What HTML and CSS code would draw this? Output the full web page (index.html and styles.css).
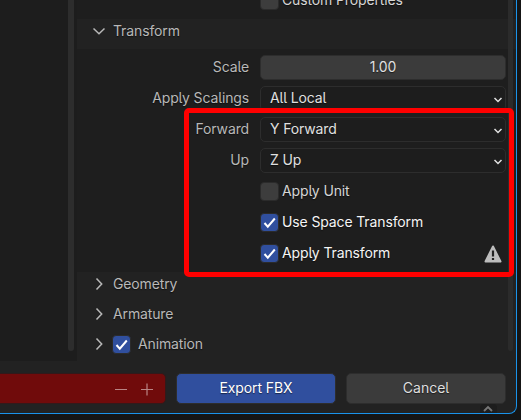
FILE: index.html
```html
<!DOCTYPE html>
<html lang="en">
<head>
<meta charset="utf-8">
<title>Export FBX</title>
<link rel="stylesheet" href="styles.css">
</head>
<body>
<main class="dialog">
  <div class="body">
    <aside class="files"><div class="bar"></div></aside>
    <section class="options">
      <div class="content top">
        <div class="row clipped"><span class="label"></span><span class="check"></span><span class="text">Custom Properties</span></div>
      </div>
      <div class="header open">
        <svg class="chev" viewBox="0 0 14 14"><path d="M1.500 4.500 7 9.700l5.500-5.200"/></svg><span>Transform</span>
      </div>
      <div class="content props">
        <div class="row"><span class="label">Scale</span><div class="number">1.00</div></div>
        <div class="row"><span class="label">Apply Scalings</span><div class="select"><span>All Local</span><svg viewBox="0 0 10 8"><path d="m1.500 2 3.500 3.500L8.500 2"/></svg></div></div>
        <div class="row"><span class="label">Forward</span><div class="select"><span>Y Forward</span><svg viewBox="0 0 10 8"><path d="m1.500 2 3.500 3.500L8.500 2"/></svg></div></div>
        <div class="row"><span class="label">Up</span><div class="select"><span>Z Up</span><svg viewBox="0 0 10 8"><path d="m1.500 2 3.500 3.500L8.500 2"/></svg></div></div>
        <div class="row"><span class="label"></span><span class="check"></span><span class="text">Apply Unit</span></div>
        <div class="row"><span class="label"></span><span class="check on"><svg viewBox="0 0 17 17"><path d="m3.500 9 3.300 3.700L13.800 4.500"/></svg></span><span class="text lit">Use Space Transform</span></div>
        <div class="row"><span class="label"></span><span class="check on"><svg viewBox="0 0 17 17"><path d="m3.500 9 3.300 3.700L13.800 4.500"/></svg></span><span class="text lit">Apply Transform</span>
          <svg class="warn" viewBox="0 0 18 18"><path class="tri" d="M9 1.500 16.500 16.500h-15z"/><path class="mark" d="M9 5.500v6M9 13v2"/></svg></div>
      </div>
      <div class="header"><svg class="chev" viewBox="0 0 14 14"><path d="m4.500 1.500 5.200 5.500-5.200 5.500"/></svg><span>Geometry</span></div>
      <div class="header"><svg class="chev" viewBox="0 0 14 14"><path d="m4.500 1.500 5.200 5.500-5.200 5.500"/></svg><span>Armature</span></div>
      <div class="header"><svg class="chev" viewBox="0 0 14 14"><path d="m4.500 1.500 5.200 5.500-5.200 5.500"/></svg><span class="check on"><svg viewBox="0 0 17 17"><path d="m3.500 9 3.300 3.700L13.800 4.500"/></svg></span><span class="anim">Animation</span></div>
      <div class="scroll"></div>
    </section>
  </div>
  <footer class="footer">
    <div class="filename"><svg viewBox="0 0 40 14"><path d="M1 7.500h12M27 7.500h12M33 1.500v12"/></svg></div>
    <button class="btn primary">Export FBX</button>
    <button class="btn">Cancel</button>
  </footer>
  <div class="tab"><svg viewBox="0 0 10 7"><path d="M1 6 5 2l4 4"/></svg></div>
</main>
<div class="highlight"></div>
</body>
</html>
```
FILE: styles.css
```css
* { box-sizing: border-box; }
body {
  margin: 0; width: 521px; height: 420px; overflow: hidden; background: #151515;
  color: #b8b8b8; font: 14px/20px Inter, "Liberation Sans", sans-serif;
  letter-spacing: -0.13px;
  font-feature-settings: "ss04", "cv05"; text-shadow: 0 1px 1px #0008;
}
svg { fill: none; stroke: currentColor; display: block; }
.dialog {
  position: relative; width: 517px; height: 414px; background: #222;
  border: solid #1a93ea; border-width: 0 1px 1px 0; border-radius: 0 0 8px 0;
}
.body { display: flex; height: 361px; }
.files { width: 77px; background: #1d1d1d; display: flex; justify-content: flex-end; padding-right: 3px; }
.bar { width: 6px; height: 351px; background: #2d2d2d; border-radius: 0 0 3px 3px; }
.options { position: relative; flex: 1; overflow: hidden; }
.content { background: #1e1e1e; }
.top { height: 19px; overflow: hidden; }
.row { display: flex; align-items: center; height: 25px; padding-right: 10px; }
.clipped { margin-top: -12px; }
.label { width: 172px; margin-right: 11px; padding-bottom: 2px; text-align: right; white-space: nowrap; }
.check { width: 19px; height: 19px; background: #3d3d3d; border: 1px solid #2b2b2b; border-radius: 4px; flex: none; }
.on { background: #304f9e; color: #fff; }
.on svg { width: 17px; height: 17px; stroke-width: 2; }
.text { margin-left: 3px; padding-bottom: 2px; color: #d5d5d5; white-space: nowrap; }
.lit { color: #f5f5f5; }
.header { display: flex; align-items: center; height: 30px; padding: 0 0 6px 15px; }
.chev { width: 14px; height: 14px; margin-right: 7px; stroke-width: 1.5; }
.anim { margin-left: 7px; }
.header .check { margin-left: -1px; }
.props { height: 223px; padding-top: 6px; display: flex; flex-direction: column; gap: 6px; }
.number, .select { flex: 1; height: 25px; border: 1px solid #2d2d2d; border-radius: 5px; color: #e0e0e0; }
.number { background: #3b3b3b; text-align: center; line-height: 21px; }
.select { display: flex; align-items: center; justify-content: space-between; padding: 0 2px 0 9px; background: #1d1d1d; }
.select span { padding-bottom: 2px; }
.select svg { width: 10px; height: 8px; margin-top: 3px; stroke-width: 1.5; }
.warn { width: 18px; height: 18px; margin-left: auto; margin-right: 4px; }
.tri { fill: #bdbdbd; stroke: #bdbdbd; stroke-width: 2; stroke-linejoin: round; }
.mark { stroke: #222; stroke-width: 2.2; }
.scroll { position: absolute; left: 431px; top: 0; width: 5px; height: 351px; background: #2b2b2b; border-radius: 0 0 3px 3px; }
.footer { display: flex; padding-top: 12px; }
.filename { width: 166px; height: 31px; background: #700b0b; border: 1px solid #33191a; border-left: 0; border-radius: 0 5px 5px 0; display: flex; align-items: center; justify-content: flex-end; padding-right: 11px; color: #b98585; }
.filename svg { width: 40px; height: 14px; stroke-width: 1.2; }
.btn { width: 160px; height: 31px; margin-left: 10px; padding: 0 0 1px; border: 1px solid #2d2d2d; border-radius: 5px; background: #3b3b3b; color: #dedede; font: inherit; letter-spacing: 0; font-feature-settings: inherit; text-shadow: inherit; }
.primary { background: #304f9e; color: #fff; letter-spacing: -0.1px; }
.tab { position: absolute; left: 480px; top: 404px; width: 17px; height: 9px; padding: 1px 3px; background: #1d1d1d; border-radius: 4px 4px 0 0; color: #777; }
.tab svg { width: 10px; height: 7px; stroke-width: 1.8; }
.highlight { position: absolute; left: 184px; top: 108px; width: 330px; height: 169px; border: 5px solid #f00; border-radius: 5px; }
```
